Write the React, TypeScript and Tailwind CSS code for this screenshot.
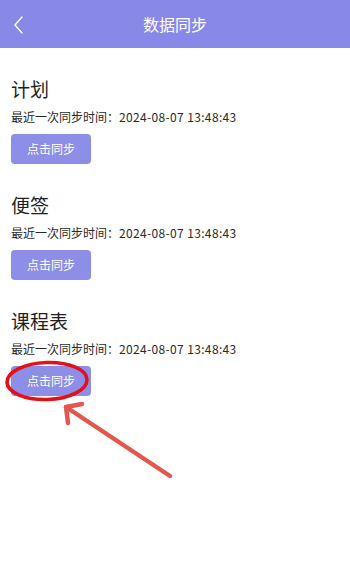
import React from "react";

const sections = ["计划", "便签", "课程表"];

export default function App() {
  return (
    <div
      className="relative w-[350px] h-[586px] bg-white overflow-hidden"
      style={{ fontFamily: '"Noto Sans CJK SC", "Noto Sans", sans-serif' }}
    >
      {/* Header */}
      <div className="relative h-12 bg-[#8788e8] flex items-center justify-center">
        <svg
          className="absolute left-[12px] top-[15px]"
          width="14"
          height="20"
          viewBox="0 0 14 20"
          fill="none"
        >
          <path d="M10 2 L3 10 L10 18" stroke="white" strokeWidth="1.4" strokeLinecap="round" strokeLinejoin="round" />
        </svg>
        <span className="text-white text-[16px] leading-none">数据同步</span>
      </div>

      {/* Content */}
      <div className="px-[11px] pt-[28px] flex flex-col gap-[28px]">
        {sections.map((name) => (
          <div key={name} className="flex flex-col items-start">
            <div className="text-[19px] leading-[26px] text-[#1f1f1f]">{name}</div>
            <div className="mt-[7px] text-[12px] leading-[16px] text-[#2a2a2a]">
              最近一次同步时间：<span className="tracking-[0.35px]">2024-08-07 13:48:43</span>
            </div>
            <button className="mt-[9px] w-[80px] h-[30px] rounded-[4px] bg-[#8d8ee8] text-white text-[12px]">
              点击同步
            </button>
          </div>
        ))}
      </div>

      {/* Annotation */}
      <svg className="absolute left-0 top-0 pointer-events-none" width="350" height="586" viewBox="0 0 350 586">
        <ellipse cx="47" cy="381" rx="40" ry="18.5" fill="none" stroke="#e3101a" strokeWidth="3.6" transform="rotate(-2 47 381)" />
        <g stroke="#e2584f" strokeWidth="4.5" strokeLinecap="round" strokeLinejoin="round" fill="none">
          <path d="M170 476 L66 407" />
          <path d="M82 404 L66 407 L68 423" />
        </g>
      </svg>
    </div>
  );
}
